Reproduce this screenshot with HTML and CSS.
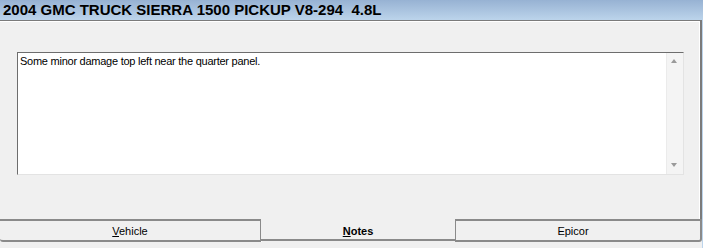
FILE: index.html
```html
<!DOCTYPE html>
<html>
<head>
<meta charset="utf-8">
<link rel="stylesheet" href="styles.css">
</head>
<body>
<div class="window">
  <div class="titlebar">2004 GMC TRUCK SIERRA 1500 PICKUP V8-294  4.8L</div>
  <div class="frame">
    <div class="main">
      <div class="panel">
        <div class="notes">
          <div class="notes-text">Some minor damage top left near the quarter panel.</div>
          <div class="scrollbar">
            <span class="arrow up"></span>
            <span class="arrow down"></span>
          </div>
        </div>
      </div>
      <div class="tabs">
        <div class="tab tab-vehicle"><span><u>V</u>ehicle</span></div>
        <div class="tab tab-notes active"><span><u>N</u>otes</span></div>
        <div class="tab tab-epicor"><span>Epicor</span></div>
      </div>
      <div class="bottom-fill"></div>
    </div>
    <div class="edge"></div>
  </div>
</div>
</body>
</html>
```
FILE: styles.css
```css
html, body {
  margin: 0;
  padding: 0;
}
body {
  width: 703px;
  height: 248px;
  overflow: hidden;
  background: #f0f0f0;
  font-family: "Liberation Sans", Arial, sans-serif;
}
.window {
  width: 703px;
  height: 248px;
  display: flex;
  flex-direction: column;
}
.titlebar {
  height: 20px;
  line-height: 20px;
  padding-left: 3px;
  background: linear-gradient(#97b2d3, #bcd4eb);
  font-weight: bold;
  font-size: 15px;
  color: #000;
  white-space: pre;
}
.frame {
  display: flex;
  flex: 1;
  min-height: 0;
}
.main {
  width: 702px;
  display: flex;
  flex-direction: column;
}
.edge {
  flex: 1;
  background: #bcd4eb;
}
.panel {
  box-sizing: border-box;
  height: 199px;
  flex: none;
  background: #f0f0f0;
  border-top: 1px solid #7b7b7b;
  border-right: 2px solid #7b7b7b;
  box-shadow: inset 0 1px 0 #ffffff, inset -1px 0 0 #ffffff;
  padding-top: 31px;
  padding-left: 17px;
}
.notes {
  width: 665px;
  height: 121px;
  background: #fff;
  border: 1px solid;
  border-color: #6d6d6d #e3e3e3 #e3e3e3 #6d6d6d;
  display: flex;
}
.notes-text {
  flex: 1;
  font-size: 11px;
  line-height: 13px;
  letter-spacing: -0.25px;
  padding: 2px 2px;
  color: #000;
}
.scrollbar {
  width: 16px;
  background: #f4f4f4;
  border-left: 1px solid #ebebeb;
  position: relative;
}
.arrow {
  position: absolute;
  left: 4px;
  width: 0;
  height: 0;
  border-left: 3.5px solid transparent;
  border-right: 3.5px solid transparent;
}
.arrow.up {
  top: 6px;
  border-bottom: 4px solid #9a9a9a;
}
.arrow.down {
  bottom: 7px;
  border-top: 4px solid #9a9a9a;
}
.tabs {
  display: flex;
  height: 24px;
  flex: none;
  font-size: 11px;
  color: #000;
}
.tab {
  display: flex;
  align-items: center;
  justify-content: center;
  box-sizing: border-box;
  background: #f0f0f0;
}
.tab span {
  padding-top: 1px;
}
.tab-vehicle {
  width: 261px;
  height: 23px;
  border-top: 2px solid #8a8a8a;
  border-right: 1px solid #8a8a8a;
  border-bottom: 2px solid #8a8a8a;
  border-bottom-left-radius: 3px;
  box-shadow: 1px 0 0 #ffffff;
}
.tab-notes {
  width: 194px;
  height: 22px;
  border-bottom: 2px solid #8a8a8a;
  font-weight: bold;
}
.tab-notes span {
  padding-top: 3px;
}
.tab-epicor {
  width: 247px;
  height: 23px;
  border-top: 2px solid #8a8a8a;
  border-left: 1px solid #8a8a8a;
  border-right: 2px solid #8a8a8a;
  border-bottom: 2px solid #8a8a8a;
  border-bottom-right-radius: 3px;
  padding-right: 10px;
}
.bottom-fill {
  flex: 1;
  background: #f0f0f0;
}
```
